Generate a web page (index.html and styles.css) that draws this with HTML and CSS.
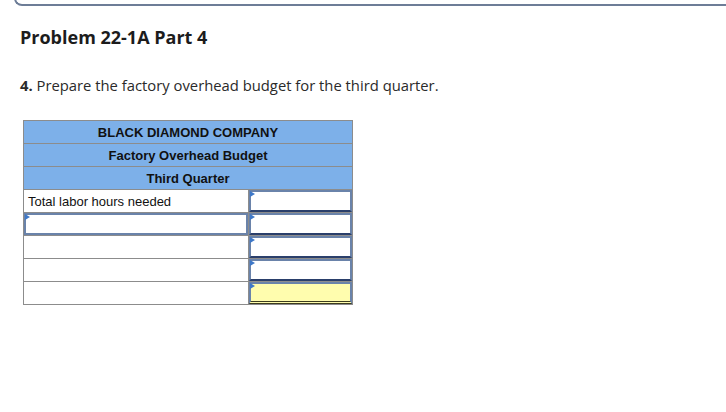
FILE: index.html
```html
<!DOCTYPE html>
<html>
<head>
<meta charset="utf-8">
<link rel="stylesheet" href="styles.css">
</head>
<body>
<div class="prev-card"></div>
<h1 class="title">Problem 22-1A Part 4</h1>
<p class="prompt"><b>4.</b> Prepare the factory overhead budget for the third quarter.</p>
<table class="budget">
  <colgroup><col class="c1"><col class="c2"></colgroup>
  <tr class="hdr"><td colspan="2">BLACK DIAMOND COMPANY</td></tr>
  <tr class="hdr"><td colspan="2">Factory Overhead Budget</td></tr>
  <tr class="hdr"><td colspan="2">Third Quarter</td></tr>
  <tr><td class="lbl">Total labor hours needed</td><td class="inp"><span class="tri"></span><div class="box"></div></td></tr>
  <tr><td class="lbl sel"><span class="tri"></span><div class="lbox"></div></td><td class="inp"><span class="tri"></span><div class="box"></div></td></tr>
  <tr><td class="lbl"></td><td class="inp"><span class="tri"></span><div class="box"></div></td></tr>
  <tr><td class="lbl"></td><td class="inp"><span class="tri"></span><div class="box"></div></td></tr>
  <tr><td class="lbl"></td><td class="inp total"><span class="tri"></span><div class="box"></div></td></tr>
</table>
</body>
</html>
```
FILE: styles.css
```css
html, body { margin: 0; padding: 0; background: #fff; overflow: hidden; }
body { font-family: "Open Sans", "Liberation Sans", sans-serif; color: #222; }
.prev-card {
  margin-left: 14px;
  margin-right: -20px;
  margin-top: -20px;
  height: 24px;
  border: 2px solid #6d7d97;
  border-top: none;
  border-right: none;
  border-radius: 0 0 0 8px;
}
.title {
  margin: 18px 0 0 20px;
  font-size: 18px;
  font-weight: 700;
  line-height: 26px;
  color: #1c1c1c;
}
.prompt {
  margin: 25px 0 0 20px;
  font-size: 14.8px;
  line-height: 20px;
  color: #2a2a2a;
}
.prompt b { font-weight: 700; }
.budget {
  margin: 25px 0 0 23px;
  border-collapse: collapse;
  table-layout: fixed;
  width: 329px;
  font-family: "Liberation Sans", Arial, sans-serif;
  font-size: 13px;
  color: #111;
}
.c1 { width: 225px; }
.c2 { width: 104px; }
.budget td {
  border: 1px solid #8c8c8c;
  height: 22px;
  padding: 0;
  box-sizing: content-box;
}
.hdr td {
  background: #7db0e9;
  text-align: center;
  font-weight: 700;
}
.lbl {
  padding: 0 0 0 4px !important;
  position: relative;
  background: #fff;
}
.inp {
  position: relative;
}
.box {
  position: absolute;
  left: 0; top: 0; right: 0; bottom: 0;
  border: 2px solid #6a83aa;
  border-bottom-color: #2a3f6b;
}
.lbox {
  position: absolute;
  left: 0; top: 0; right: 0; bottom: 0;
  border: 2px solid #6a83aa;
}
.total .box { background: #fffdae; border-bottom: 3px double #3b3b1e; }
.tri {
  position: absolute;
  left: 1px; top: 1px;
  width: 0; height: 0;
  border-top: 3px solid transparent;
  border-bottom: 3px solid transparent;
  border-left: 5px solid #3e78c8;
  z-index: 2;
}
```
